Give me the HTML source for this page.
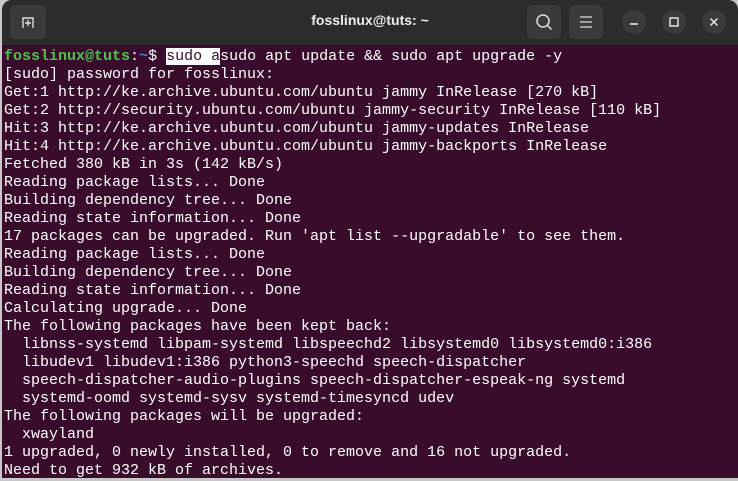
<!DOCTYPE html>
<html><head><meta charset="utf-8"><style>
html,body{margin:0;padding:0;width:738px;height:481px;overflow:hidden;background:#c8c8c8;}
.win{position:absolute;left:2px;top:0;width:736px;height:478px;background:#380c2a;border-radius:10px 10px 0 0;overflow:hidden;}
.hdr{position:absolute;left:0;top:0;width:736px;height:45px;background:#2c2c2c;}
.btn{position:absolute;top:5px;width:34px;height:32px;background:#3a3a3a;border-radius:6px;}
.circ{position:absolute;top:10px;width:24px;height:24px;border-radius:50%;background:#3a3a3a;}
.title{position:absolute;left:0;width:736px;top:12px;text-align:center;color:#eee;font:bold 14px "Liberation Sans",sans-serif;}
pre{position:absolute;left:2px;top:48px;margin:0;font:15px/18px "Liberation Mono",monospace;color:#ffffff;}
.g{color:#4ec24e;font-weight:bold}.b{color:#4a7fd0;font-weight:bold}
.sel{background:#fff;color:#380c2a}
</style></head><body>
<div class="win">
<div class="hdr">
 <div class="btn" style="left:8px;width:36px;top:5px;height:34px;"><svg width="36" height="34"><path d="M13 23V13h10v10" fill="none" stroke="#ddd" stroke-width="1.4"/><path d="M18 15v6M15 18h6" stroke="#ddd" stroke-width="1.4"/></svg></div>
 <div class="title">fosslinux@tuts: ~</div>
 <div class="btn" style="left:525px;top:5px;height:34px;"><svg width="34" height="34"><circle cx="16" cy="16" r="6" fill="none" stroke="#ddd" stroke-width="1.5"/><path d="M20.5 20.5l4 4" stroke="#ddd" stroke-width="1.5"/></svg></div>
 <div class="btn" style="left:567px;top:5px;height:34px;"><svg width="34" height="34"><path d="M11 12h12M11 17h12M11 22h12" stroke="#ddd" stroke-width="1.3"/></svg></div>
 <div class="circ" style="left:620px"><svg width="24" height="24"><path d="M8 14h8" stroke="#eee" stroke-width="1.5"/></svg></div>
 <div class="circ" style="left:660px"><svg width="24" height="24"><rect x="8" y="8" width="8" height="8" fill="none" stroke="#eee" stroke-width="1.4"/></svg></div>
 <div class="circ" style="left:700px"><svg width="24" height="24"><path d="M8.5 8.5l7 7M15.5 8.5l-7 7" stroke="#eee" stroke-width="1.4"/></svg></div>
</div>
<pre><span class="g">fosslinux@tuts</span>:<span class="b">~</span>$ <span class="sel">sudo a</span>sudo apt update &amp;&amp; sudo apt upgrade -y
[sudo] password for fosslinux: 
Get:1 http://ke.archive.ubuntu.com/ubuntu jammy InRelease [270 kB]
Get:2 http://security.ubuntu.com/ubuntu jammy-security InRelease [110 kB]
Hit:3 http://ke.archive.ubuntu.com/ubuntu jammy-updates InRelease
Hit:4 http://ke.archive.ubuntu.com/ubuntu jammy-backports InRelease
Fetched 380 kB in 3s (142 kB/s)
Reading package lists... Done
Building dependency tree... Done
Reading state information... Done
17 packages can be upgraded. Run 'apt list --upgradable' to see them.
Reading package lists... Done
Building dependency tree... Done
Reading state information... Done
Calculating upgrade... Done
The following packages have been kept back:
  libnss-systemd libpam-systemd libspeechd2 libsystemd0 libsystemd0:i386
  libudev1 libudev1:i386 python3-speechd speech-dispatcher
  speech-dispatcher-audio-plugins speech-dispatcher-espeak-ng systemd
  systemd-oomd systemd-sysv systemd-timesyncd udev
The following packages will be upgraded:
  xwayland
1 upgraded, 0 newly installed, 0 to remove and 16 not upgraded.
Need to get 932 kB of archives.</pre>
</div>
</body></html>
